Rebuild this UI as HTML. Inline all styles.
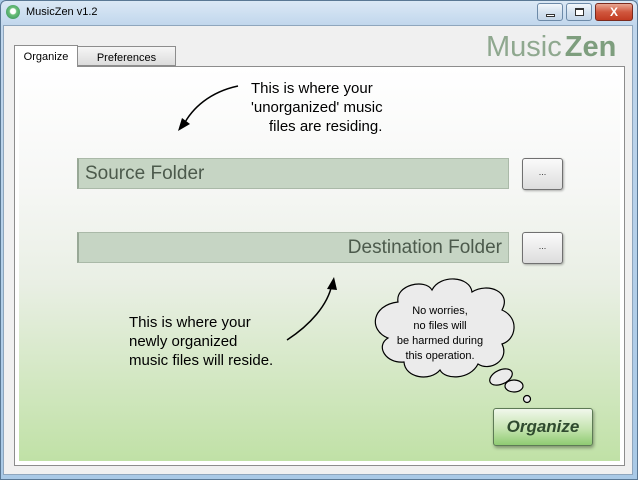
<!DOCTYPE html>
<html><head><meta charset="utf-8"><style>
*{margin:0;padding:0;box-sizing:border-box}
body{width:638px;height:480px;overflow:hidden;font-family:"Liberation Sans",sans-serif;background:#a9c9e6;position:relative}
.frame{position:absolute;left:0;top:0;width:638px;height:480px;border:1px solid #5a7894;border-radius:6px 6px 0 0;background:linear-gradient(#dbe8f5,#c0d6ec 25px,#a9c9e6)}
.title{position:absolute;left:26px;top:6px;font-size:11px;color:#000}
.icon{position:absolute;left:6px;top:5px;width:14px;height:14px;border-radius:50%;background:radial-gradient(circle at 50% 45%,#fff 25%,#6cc07a 35%,#2e8b57)}
.client{position:absolute;left:3px;top:25px;width:630px;height:450px;background:#f0f0f0;border:1px solid #8fa6bd}
.btn{position:absolute;top:3px;height:18px;border:1px solid #6d8aa8;border-radius:3px;background:linear-gradient(#f3f7fb,#d6e3f0 50%,#c3d5e8)}
.panel{position:absolute;left:14px;top:66px;width:611px;height:400px;border:1px solid #8d8d8d;background:#fff}
.inner{position:absolute;left:4px;top:0;right:4px;bottom:4px;background:linear-gradient(#fff 0%,#f6f7f5 30%,#e9efe4 55%,#c0e1a6 100%)}
.tab{position:absolute;font-size:11px;color:#000;text-align:center}
.field{position:absolute;left:77px;width:432px;height:31px;background:#c6d5c4;border:1px solid #aab9a8;border-left:2px solid #98a896;color:#4c5a4c;font-size:19px;line-height:29px;padding:0 6px}
.dots{position:absolute;left:522px;width:41px;height:32px;border:1px solid #707070;border-radius:3px;background:linear-gradient(#fafafa,#ececec 50%,#dcdcdc);box-shadow:1px 1px 2px rgba(0,0,0,.3);font-size:9px;text-align:center;line-height:26px;color:#333}
.note{position:absolute;font-size:15px;color:#000;line-height:19px}
.org{position:absolute;left:493px;top:408px;width:100px;height:38px;border:1px solid #5d7a55;border-radius:3px;background:linear-gradient(#f1f8ec,#c5e4b0 55%,#8fcb72);box-shadow:1px 2px 3px rgba(0,0,0,.35);font:italic bold 17px "Liberation Sans",sans-serif;color:#2f4a2f;text-align:center;line-height:36px}
</style></head><body>
<div class="frame"></div>
<div class="icon"></div>
<div class="title">MusicZen v1.2</div>
<div class="btn" style="left:537px;width:26px"><div style="position:absolute;left:8px;top:10px;width:9px;height:3px;border:1px solid #333;background:#fff"></div></div>
<div class="btn" style="left:566px;width:26px"><div style="position:absolute;left:8px;top:4px;width:9px;height:8px;border:1px solid #333;border-top-width:2px;background:#fff"></div></div>
<div class="btn" style="left:595px;width:38px;border-color:#7a2a1e;background:linear-gradient(#e8a793,#d0573e 50%,#c23b22);color:#fff;font-weight:bold;font-size:12px;text-align:center;line-height:16px">X</div>
<div class="client"></div>
<div style="position:absolute;left:486px;top:31px;font-size:29px;color:#8fa88f">Music<b style="color:#7e9e7e;margin-left:3px">Zen</b></div>
<div class="panel"><div class="inner"></div></div>
<div class="tab" style="left:14px;top:45px;width:64px;height:22px;border:1px solid #8d8d8d;border-bottom:none;background:#fff;line-height:22px">Organize</div>
<div class="tab" style="left:78px;top:46px;width:98px;height:20px;border:1px solid #8d8d8d;border-left:none;background:linear-gradient(#f6f6f6,#dcdcdc);line-height:22px">Preferences</div>

<div class="note" style="left:251px;top:79px">This is where your<br>'unorganized' music<br><span style="padding-left:18px">files are residing.</span></div>
<div class="note" style="left:129px;top:313px">This is where your<br>newly organized<br>music files will reside.</div>
<svg style="position:absolute;left:0;top:0" width="638" height="480">
<path d="M238 86 C210 92 192 108 183 126" stroke="#000" stroke-width="1.5" fill="none"/>
<path d="M178 131 L182 118 L190 124 Z" fill="#000"/>
<path d="M287 340 C310 325 328 305 332 284" stroke="#000" stroke-width="1.5" fill="none"/>
<path d="M334 277 L327 289 L337 290 Z" fill="#000"/>
<path d="M398 302 C395 285 425 278 432 290 C440 274 470 276 472 292 C488 282 512 292 502 310 C520 318 516 340 502 344 C510 360 490 372 478 364 C470 380 445 380 440 370 C430 382 405 378 404 362 C386 364 375 346 388 338 C368 330 372 305 398 302 Z" fill="#ebebeb" stroke="#000" stroke-width="1.2"/>
<ellipse cx="501" cy="377" rx="12" ry="7" fill="#ebebeb" stroke="#000" stroke-width="1.2" transform="rotate(-25 501 377)"/>
<ellipse cx="514" cy="386" rx="9" ry="6" fill="#ebebeb" stroke="#000" stroke-width="1.2"/>
<circle cx="527" cy="399" r="3.5" fill="#ebebeb" stroke="#000" stroke-width="1.2"/>
</svg>
<div style="position:absolute;left:370px;top:304px;width:140px;text-align:center;font-size:11px;line-height:15px">No worries,<br>no files will<br>be harmed during<br>this operation.</div>

<div class="field" style="top:158px">Source Folder</div>
<div class="dots" style="top:158px">...</div>
<div class="field" style="top:232px;text-align:right">Destination Folder</div>
<div class="dots" style="top:232px">...</div>
<div class="org">Organize</div>
</body></html>
